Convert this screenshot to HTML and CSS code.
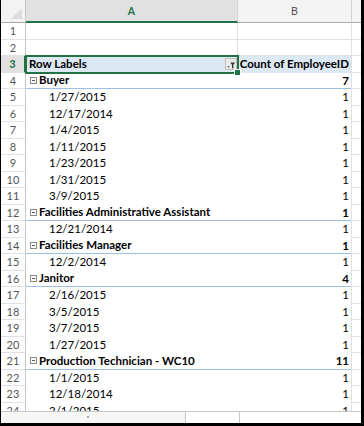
FILE: index.html
```html
<!DOCTYPE html>
<html lang="en">
<head>
  <meta charset="UTF-8" />
  <title>Pivot - Count of EmployeeID</title>
  <link rel="stylesheet" href="styles.css">
</head>
<body>
  <div class="frame">
    <div class="sheet">
      <div class="row head">
        <div class="corner"><span class="tri"></span></div>
        <div class="colhead sel">A</div>
        <div class="colhead">B</div>
        <div class="colhead last"></div>
      </div>

      <div class="row"><div class="num">1</div><div class="cell"></div><div class="cell"></div><div class="c"></div></div>
      <div class="row"><div class="num">2</div><div class="cell"></div><div class="cell"></div><div class="c"></div></div>

      <div class="row">
        <div class="num sel">3</div>
        <div class="a pivhead active">
          <span>Row Labels</span>
          <span class="filter">
            <svg width="12" height="12" viewBox="0 0 12 12">
              <path d="M1.5 7.5h3l-1.5 2z" fill="#555"/>
              <path d="M5 3h6l-2.2 2.6v4.4h-1.6v-4.4z" fill="#333"/>
            </svg>
          </span>
          <span class="handle"></span>
        </div>
        <div class="b pivhead">Count of EmployeeID</div>
        <div class="c"></div>
      </div>

      <div class="row group"><div class="num">4</div><div class="a"><span class="box"></span>Buyer</div><div class="b">7</div><div class="c"></div></div>
      <div class="row item"><div class="num">5</div><div class="a">1/27/2015</div><div class="b">1</div><div class="c"></div></div>
      <div class="row item"><div class="num">6</div><div class="a">12/17/2014</div><div class="b">1</div><div class="c"></div></div>
      <div class="row item"><div class="num">7</div><div class="a">1/4/2015</div><div class="b">1</div><div class="c"></div></div>
      <div class="row item"><div class="num">8</div><div class="a">1/11/2015</div><div class="b">1</div><div class="c"></div></div>
      <div class="row item"><div class="num">9</div><div class="a">1/23/2015</div><div class="b">1</div><div class="c"></div></div>
      <div class="row item"><div class="num">10</div><div class="a">1/31/2015</div><div class="b">1</div><div class="c"></div></div>
      <div class="row item"><div class="num">11</div><div class="a">3/9/2015</div><div class="b">1</div><div class="c"></div></div>
      <div class="row group"><div class="num">12</div><div class="a"><span class="box"></span>Facilities Administrative Assistant</div><div class="b">1</div><div class="c"></div></div>
      <div class="row item"><div class="num">13</div><div class="a">12/21/2014</div><div class="b">1</div><div class="c"></div></div>
      <div class="row group"><div class="num">14</div><div class="a"><span class="box"></span>Facilities Manager</div><div class="b">1</div><div class="c"></div></div>
      <div class="row item"><div class="num">15</div><div class="a">12/2/2014</div><div class="b">1</div><div class="c"></div></div>
      <div class="row group"><div class="num">16</div><div class="a"><span class="box"></span>Janitor</div><div class="b">4</div><div class="c"></div></div>
      <div class="row item"><div class="num">17</div><div class="a">2/16/2015</div><div class="b">1</div><div class="c"></div></div>
      <div class="row item"><div class="num">18</div><div class="a">3/5/2015</div><div class="b">1</div><div class="c"></div></div>
      <div class="row item"><div class="num">19</div><div class="a">3/7/2015</div><div class="b">1</div><div class="c"></div></div>
      <div class="row item"><div class="num">20</div><div class="a">1/27/2015</div><div class="b">1</div><div class="c"></div></div>
      <div class="row group"><div class="num">21</div><div class="a"><span class="box"></span>Production Technician - WC10</div><div class="b">11</div><div class="c"></div></div>
      <div class="row item"><div class="num">22</div><div class="a">1/1/2015</div><div class="b">1</div><div class="c"></div></div>
      <div class="row item"><div class="num">23</div><div class="a">12/18/2014</div><div class="b">1</div><div class="c"></div></div>
      <div class="row item"><div class="num">24</div><div class="a">2/1/2015</div><div class="b">1</div><div class="c"></div></div>
    </div>

    <div class="bottombar">
      <div class="tabs"><span class="dots"></span></div>
      <div class="gap"></div>
      <div class="scroll"></div>
    </div>
  </div>
</body>
</html>
```

FILE: styles.css
```css
body {
  margin: 0;
  font-family: Lato, "Liberation Sans", sans-serif;
  font-size: 11.5px;
  color: #000;
  background: #fff;
}
.frame {
  width: 364px;
  height: 426px;
  box-sizing: border-box;
  border-left: 1px solid #000;
  border-right: 3px solid #000;
  border-bottom: 3px solid #000;
  display: flex;
  flex-direction: column;
  overflow: hidden;
}
.sheet {
  height: 411px;
  overflow: hidden;
  flex: none;
}
.row {
  display: grid;
  grid-template-columns: 25px 212px 114px 1fr;
  height: 16.5px;
  line-height: 16px;
}
.row > div {
  box-sizing: border-box;
  white-space: nowrap;
  overflow: hidden;
}

/* column headers */
.row.head {
  height: 23px;
  line-height: 22px;
}
.corner {
  position: relative;
  background: #f3f3f3;
  border-right: 1px solid #c6c6c6;
  border-bottom: 1px solid #ababab;
}
.tri {
  position: absolute;
  right: 3px;
  bottom: 3px;
  width: 0;
  height: 0;
  border-left: 11px solid transparent;
  border-bottom: 11px solid #dcdcdc;
}
.colhead {
  background: #f3f3f3;
  color: #555;
  text-align: center;
  font-size: 10.5px;
  border-right: 1px solid #d4d4d4;
  border-bottom: 1px solid #ababab;
}
.colhead.sel {
  background: #e1e1e1;
  color: #217346;
  font-weight: bold;
  border-bottom: 2px solid #217346;
}
.colhead.last {
  border-right: none;
}

/* row numbers */
.num {
  text-align: center;
  color: #555;
  font-size: 11px;
  background: #fff;
  border-right: 1px solid #c6c6c6;
  border-bottom: 1px solid #e1e1e1;
}
.num.sel {
  background: #e1e1e1;
  color: #217346;
  font-weight: bold;
  border-right: 2px solid #217346;
}

/* cells */
.cell {
  border-right: 1px solid #e1e1e1;
  border-bottom: 1px solid #e1e1e1;
}
.c {
  border-left: 1px solid #e1e1e1;
  border-bottom: 1px solid #e1e1e1;
  margin-left: -1px;
}
.a {
  padding-left: 3px;
}
.b {
  text-align: right;
  padding-right: 3px;
}

.pivhead {
  background: #dde8f5;
  font-weight: bold;
}
.a.active {
  position: relative;
  z-index: 1;
  display: flex;
  align-items: center;
  justify-content: space-between;
  padding-right: 1px;
  overflow: visible;
  box-shadow: 0 0 0 1px #217346, inset 0 0 0 1px #217346;
}
.filter {
  width: 12px;
  height: 12px;
  background: #eaeaea;
  border: 1px solid #c0c0c0;
  box-sizing: border-box;
  display: flex;
}
.handle {
  position: absolute;
  right: -3px;
  bottom: -3px;
  width: 5px;
  height: 5px;
  background: #217346;
  border: 1px solid #fff;
}

.group > .a,
.group > .b {
  font-weight: bold;
  border-bottom: 1px solid #9bc2e6;
}
.group > .a {
  padding-left: 4px;
  display: flex;
  align-items: center;
}
.box {
  width: 7px;
  height: 7px;
  border: 1px solid #8a8a8a;
  box-sizing: border-box;
  margin-right: 2px;
  position: relative;
  flex: none;
}
.box::after {
  content: "";
  position: absolute;
  left: 1px;
  right: 1px;
  top: 2px;
  height: 1px;
  background: #555;
}
.item > .a {
  padding-left: 23px;
}

/* bottom strip */
.bottombar {
  flex: 1;
  display: flex;
  border-top: 1px solid #c6c6c6;
  background: #f7f7f7;
}
.tabs {
  width: 184px;
  border-right: 1px solid #c6c6c6;
  position: relative;
}
.dots {
  position: absolute;
  left: 86px;
  top: 4px;
  width: 2px;
  height: 2px;
  background: #aaa;
}
.gap {
  width: 53px;
  background: #fff;
}
.scroll {
  flex: 1;
  background: #fff;
  border-left: 1px solid #c6c6c6;
}
```
